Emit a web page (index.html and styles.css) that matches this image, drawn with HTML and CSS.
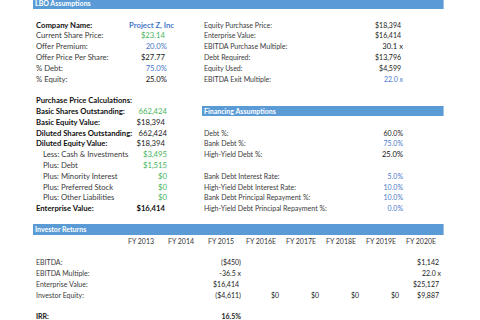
FILE: index.html
```html
<!DOCTYPE html>
<html>
<head>
<meta charset="utf-8">
<link rel="stylesheet" href="styles.css">
</head>
<body>
<div class="sheet">
  <div class="bar top">LBO Assumptions</div>
  <div class="blank"></div>
  <div class="upper">
    <div class="left">
      <div class="row"><span class="lbl b dark">Company Name:</span><span class="val blue semi proj">Project Z, Inc</span></div>
      <div class="row"><span class="lbl">Current Share Price:</span><span class="val green pad">$23.14</span></div>
      <div class="row"><span class="lbl">Offer Premium:</span><span class="val blue">20.0%</span></div>
      <div class="row"><span class="lbl">Offer Price Per Share:</span><span class="val pad">$27.77</span></div>
      <div class="row"><span class="lbl">% Debt:</span><span class="val blue">75.0%</span></div>
      <div class="row"><span class="lbl">% Equity:</span><span class="val dark">25.0%</span></div>
      <div class="blank"></div>
      <div class="row"><span class="lbl b dark">Purchase Price Calculations:</span></div>
      <div class="row"><span class="lbl b dark">Basic Shares Outstanding:</span><span class="val green">662,424</span></div>
      <div class="row"><span class="lbl b dark">Basic Equity Value:</span><span class="val pad">$18,394</span></div>
      <div class="row"><span class="lbl b dark">Diluted Shares Outstanding:</span><span class="val">662,424</span></div>
      <div class="row"><span class="lbl b dark">Diluted Equity Value:</span><span class="val pad">$18,394</span></div>
      <div class="row ind"><span class="lbl">Less: Cash &amp; Investments</span><span class="val green">$3,495</span></div>
      <div class="row ind"><span class="lbl">Plus: Debt</span><span class="val green">$1,515</span></div>
      <div class="row ind"><span class="lbl">Plus: Minority Interest</span><span class="val green">$0</span></div>
      <div class="row ind"><span class="lbl">Plus: Preferred Stock</span><span class="val green">$0</span></div>
      <div class="row ind"><span class="lbl">Plus: Other Liabilities</span><span class="val green">$0</span></div>
      <div class="row"><span class="lbl b dark">Enterprise Value:</span><span class="val b dark pad">$16,414</span></div>
    </div>
    <div class="right">
      <div class="row"><span class="lbl">Equity Purchase Price:</span><span class="val pad">$18,394</span></div>
      <div class="row"><span class="lbl">Enterprise Value:</span><span class="val pad">$16,414</span></div>
      <div class="row"><span class="lbl">EBITDA Purchase Multiple:</span><span class="val big">30.1 x</span></div>
      <div class="row"><span class="lbl">Debt Required:</span><span class="val pad">$13,796</span></div>
      <div class="row"><span class="lbl">Equity Used:</span><span class="val pad">$4,599</span></div>
      <div class="row"><span class="lbl">EBITDA Exit Multiple:</span><span class="val blue">22.0 x</span></div>
      <div class="blank"></div>
      <div class="blank"></div>
      <div class="bar">Financing Assumptions</div>
      <div class="blank"></div>
      <div class="row"><span class="lbl">Debt %:</span><span class="val">60.0%</span></div>
      <div class="row"><span class="lbl">Bank Debt %:</span><span class="val blue">75.0%</span></div>
      <div class="row"><span class="lbl">High-Yield Debt %:</span><span class="val dark big">25.0%</span></div>
      <div class="blank"></div>
      <div class="row"><span class="lbl">Bank Debt Interest Rate:</span><span class="val blue">5.0%</span></div>
      <div class="row"><span class="lbl">High-Yield Debt Interest Rate:</span><span class="val blue">10.0%</span></div>
      <div class="row"><span class="lbl">Bank Debt Principal Repayment %:</span><span class="val blue">10.0%</span></div>
      <div class="row"><span class="lbl">High-Yield Debt Principal Repayment %:</span><span class="val blue">0.0%</span></div>
    </div>
  </div>
  <div class="blank"></div>
  <div class="bar">Investor Returns</div>
  <div class="returns">
    <span></span>
    <span class="hd">FY 2013</span><span class="hd">FY 2014</span><span class="hd">FY 2015</span><span class="hd">FY 2016E</span>
    <span class="hd">FY 2017E</span><span class="hd">FY 2018E</span><span class="hd">FY 2019E</span><span class="hd">FY 2020E</span>
    <span class="full"></span>

    <span class="rl">EBITDA:</span>
    <span></span><span></span><span class="num red">($450)</span><span></span><span></span><span></span><span></span><span class="num pad">$1,142</span>

    <span class="rl">EBITDA Multiple:</span>
    <span></span><span></span><span class="num">-36.5 x</span><span></span><span></span><span></span><span></span><span class="num">22.0 x</span>

    <span class="rl">Enterprise Value:</span>
    <span></span><span></span><span class="num pad">$16,414</span><span></span><span></span><span></span><span></span><span class="num pad">$25,127</span>

    <span class="rl">Investor Equity:</span>
    <span></span><span></span><span class="num red">($4,611)</span><span class="num pad">$0</span><span class="num pad">$0</span><span class="num pad">$0</span><span class="num pad blue">$0</span><span class="num pad">$9,887</span>

    <span class="full"></span>

    <span class="rl b dark">IRR:</span>
    <span></span><span></span><span class="num b dark">16.5%</span>
  </div>
</div>
</body>
</html>
```

FILE: styles.css
```css
html, body {
  margin: 0;
  padding: 0;
  background: #ffffff;
  overflow: hidden;
}

body {
  font-family: Lato, "Liberation Sans", sans-serif;
  font-size: 7px;
  color: #3a3a3a;
}

.sheet {
  width: 411px;
  margin: -1px 0 0 33px;
}

.bar {
  height: 10.8px;
  line-height: 10.8px;
  background: #5b9bd5;
  color: #ffffff;
  font-weight: 700;
  padding-left: 2px;
  box-sizing: border-box;
  border-right: 1px solid #9cc2e5;
  white-space: nowrap;
  overflow: hidden;
}

.bar.top {
  height: 9.5px;
  line-height: 8.5px;
}

.blank {
  height: 10.8px;
}

.upper {
  display: flex;
}

.left {
  width: 136px;
  box-sizing: border-box;
  padding: 0 2px 0 3px;
  font-size: 7.7px;
}

.right {
  width: 242px;
  margin-left: 33px;
}

.right .row {
  padding: 0 41px 0 2px;
}

.row {
  display: flex;
  align-items: center;
  height: 10.8px;
  white-space: nowrap;
}

.row.ind {
  padding-left: 7px;
}

.lbl {
  flex: 1;
}

.val {
  text-align: right;
  color: #222;
}

.b { font-weight: 700; }
.semi { font-weight: 700; }
.dark { color: #111; }
.big { font-size: 7.6px; }

.pad { padding-right: 2px; }

.green { color: #46b45a; }
.blue { color: #4a78c9; }
.red { color: #e04848; }

.proj {
  margin-right: -7px;
}

.returns {
  display: grid;
  grid-template-columns: 88px repeat(8, 40px);
  grid-auto-rows: 10.8px;
  align-items: center;
  white-space: nowrap;
}

.returns .full {
  grid-column: 1 / -1;
}

.rl {
  padding-left: 3px;
}

.hd {
  text-align: center;
  color: #333;
}

.num {
  text-align: right;
  color: #222;
}
```
